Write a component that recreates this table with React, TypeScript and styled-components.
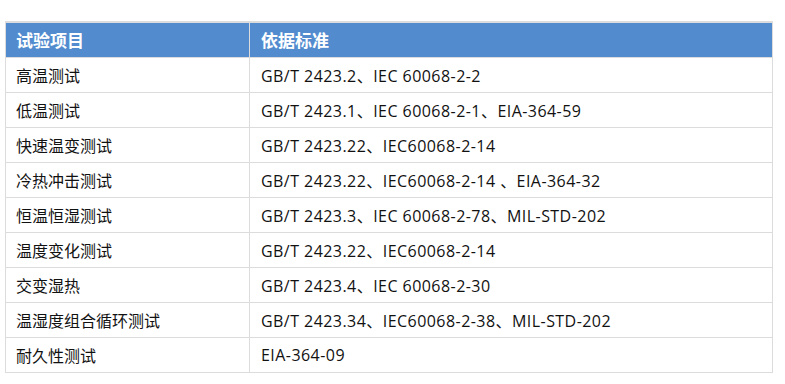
import React from "react";
import styled, { createGlobalStyle } from "styled-components";

const GlobalStyle = createGlobalStyle`
  html, body {
    margin: 0;
    padding: 0;
    background: #ffffff;
  }
  body {
    font-family: "Open Sans", "Noto Sans CJK SC", sans-serif;
  }
`;

const Page = styled.div`
  padding: 21px 0 0 5px;
`;

const Table = styled.table`
  width: 768px;
  border-collapse: collapse;
  border-top: 2px solid #dcdcdc;
  font-size: 16px;
  color: #111;
`;

const HeadCell = styled.th<{ $first?: boolean }>`
  background: #528ccf;
  color: #ffffff;
  font-weight: 700;
  font-size: 17px;
  text-align: left;
  height: 35px;
  padding: 0 0 0 ${(p) => (p.$first ? 10 : 11)}px;
  border: 1px solid #dcdcdc;
  border-top: none;
  width: ${(p) => (p.$first ? "244px" : "auto")};
  box-sizing: border-box;
`;

const Cell = styled.td<{ $first?: boolean }>`
  height: 35px;
  padding: 0 0 0 ${(p) => (p.$first ? 10 : 11)}px;
  border: 1px solid #dcdcdc;
  box-sizing: border-box;
  white-space: nowrap;
  font-size: 16px;
  letter-spacing: ${(p) => (p.$first ? 0 : 0.45)}px;
`;

const rows: [string, string][] = [
  ["高温测试", "GB/T 2423.2、IEC 60068-2-2"],
  ["低温测试", "GB/T 2423.1、IEC 60068-2-1、EIA-364-59"],
  ["快速温变测试", "GB/T 2423.22、IEC60068-2-14"],
  ["冷热冲击测试", "GB/T 2423.22、IEC60068-2-14 、EIA-364-32"],
  ["恒温恒湿测试", "GB/T 2423.3、IEC 60068-2-78、MIL-STD-202"],
  ["温度变化测试", "GB/T 2423.22、IEC60068-2-14"],
  ["交变湿热", "GB/T 2423.4、IEC 60068-2-30"],
  ["温湿度组合循环测试", "GB/T 2423.34、IEC60068-2-38、MIL-STD-202"],
  ["耐久性测试", "EIA-364-09"],
];

export default function App() {
  return (
    <>
      <GlobalStyle />
      <Page>
        <Table>
          <thead>
            <tr>
              <HeadCell $first>试验项目</HeadCell>
              <HeadCell>依据标准</HeadCell>
            </tr>
          </thead>
          <tbody>
            {rows.map(([item, std]) => (
              <tr key={item}>
                <Cell $first>{item}</Cell>
                <Cell>{std}</Cell>
              </tr>
            ))}
          </tbody>
        </Table>
      </Page>
    </>
  );
}
